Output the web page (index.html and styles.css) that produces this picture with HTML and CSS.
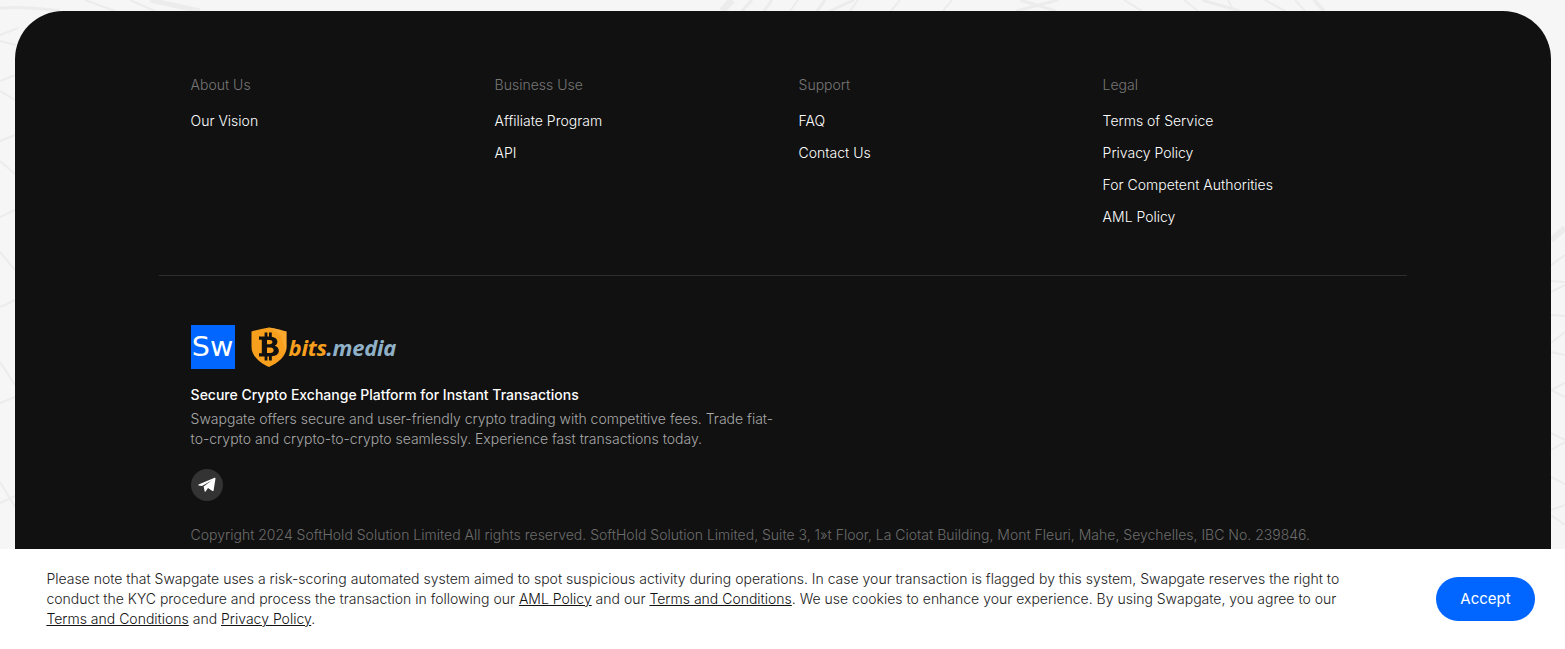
FILE: index.html
```html
<!DOCTYPE html>
<html lang="en">
<head>
<meta charset="utf-8">
<title>Swapgate</title>
<link rel="stylesheet" href="styles.css">
</head>
<body>
<svg class="bg-lines" width="1565" height="649" viewBox="0 0 1565 649" fill="none" aria-hidden="true">
  <g stroke="#ececec" stroke-width="2">
    <path d="M0 8Q25 6 60 11" stroke-width="3"/>
    <path d="M0 35L18 28"/>
    <path d="M0 41L16 45"/>
    <path d="M0 81L15 75"/>
    <path d="M0 91L15 100"/>
    <path d="M0 141L15 135"/>
    <path d="M0 161L15 174"/>
    <path d="M0 217L15 210"/>
    <path d="M0 252L15 270"/>
    <path d="M0 307L15 300"/>
    <path d="M0 362L15 385"/>
    <path d="M0 403L15 397"/>
    <path d="M0 482L15 507"/>
    <path d="M0 503L15 496"/>
    <path d="M85 0L115 11"/>
    <path d="M130 0L155 11"/>
    <path d="M150 0L200 11" stroke-width="5"/>
    <path d="M732 0L722 11" stroke-width="7"/>
    <path d="M752 0L742 11" stroke-width="3"/>
    <path d="M772 0L764 11" stroke-width="3"/>
    <path d="M798 0L790 11"/>
    <path d="M825 0L817 11" stroke-width="3"/>
    <path d="M854 0L830 11" stroke-width="3"/>
    <path d="M858 0L850 11"/>
    <path d="M900 0L891 11"/>
    <path d="M952 0L943 11"/>
    <path d="M1058 0L1016 11" stroke-width="3"/>
    <path d="M1020 0L1056 11" stroke-width="3"/>
    <path d="M1124 0L1142 11"/>
    <path d="M1184 0L1198 11"/>
    <path d="M1202 0L1240 11" stroke-width="3"/>
    <path d="M1228 0L1234 11"/>
    <path d="M1265 0L1285 11"/>
    <path d="M1295 0L1305 11"/>
    <path d="M1314 0L1324 11" stroke-width="4"/>
    <path d="M1551 240L1565 228" stroke-width="6"/>
    <path d="M1551 265L1565 255"/>
    <path d="M1551 281L1565 282"/>
    <path d="M1551 292L1565 285"/>
    <path d="M1551 315L1565 316"/>
    <path d="M1551 343L1565 332"/>
    <path d="M1551 352L1565 355"/>
    <path d="M1551 390L1565 383"/>
    <path d="M1551 390L1565 397"/>
    <path d="M1551 433L1565 440"/>
    <path d="M1551 450L1565 442"/>
    <path d="M1551 477L1565 484"/>
    <path d="M1551 510L1565 505"/>
    <path d="M1551 515L1565 525"/>
  </g>
</svg>
<footer class="footer">
  <div class="footer-inner">
    <nav class="link-grid">
      <div class="link-col">
        <h3 class="col-title">About Us</h3>
        <a class="col-link" href="#">Our Vision</a>
      </div>
      <div class="link-col">
        <h3 class="col-title">Business Use</h3>
        <a class="col-link" href="#">Affiliate Program</a>
        <a class="col-link" href="#">API</a>
      </div>
      <div class="link-col">
        <h3 class="col-title">Support</h3>
        <a class="col-link" href="#">FAQ</a>
        <a class="col-link" href="#">Contact Us</a>
      </div>
      <div class="link-col">
        <h3 class="col-title">Legal</h3>
        <a class="col-link" href="#">Terms of Service</a>
        <a class="col-link" href="#">Privacy Policy</a>
        <a class="col-link" href="#">For Competent Authorities</a>
        <a class="col-link" href="#">AML Policy</a>
      </div>
    </nav>
    <div class="about">
      <div class="logos">
        <div class="sw-logo"><span class="sw-mark">Sw</span></div>
        <div class="bits-logo">
          <svg class="shield" width="36" height="40" viewBox="0 0 36 40">
            <path d="M0.5 4.5C6 3 12 1.5 18 0.5C24 1.5 30 3 35.5 4.5V20C35.5 29 27 36 18 40C9 36 0.5 29 0.5 20Z" fill="#f8a01e"/>
            <path d="M18 0.5C24 1.5 30 3 35.5 4.5V20C35.5 22 35 24 34.5 25L30 8Z" fill="#fbb040" opacity=".55"/>
            <path d="M8 9.5H13.6V5.5H16.4V9.5H18V5.5H20.8V9.7C24.4 10.3 26.4 12 26.4 14.8C26.4 16.7 25.4 18 23.8 18.7C26.2 19.4 27.8 21.2 27.8 23.8C27.8 27.1 25.2 29 20.8 29.3V33.5H18V29.4H16.4V33.5H13.6V29.4H8V26.2H10.8V12.7H8ZM16 13V17.2H18.8C20.4 17.2 21.4 16.5 21.4 15.1S20.4 13 18.8 13ZM16 20.6V26H19.4C21.4 26 22.6 25.1 22.6 23.3S21.4 20.6 19.4 20.6Z" fill="#111" fill-rule="evenodd"/>
          </svg>
          <span class="bits-word"><span class="bits-orange">bits</span><span class="bits-blue">.media</span></span>
        </div>
      </div>
      <h4 class="about-title">Secure Crypto Exchange Platform for Instant Transactions</h4>
      <p class="about-text">Swapgate offers secure and user-friendly crypto trading with competitive fees. Trade fiat-to-crypto and crypto-to-crypto seamlessly. Experience fast transactions today.</p>
      <a class="social" href="#" aria-label="Telegram">
        <svg width="18" height="16" viewBox="0 0 18 16">
          <path d="M0.6 7.6L16.6 0.8C17.2 0.6 17.6 1 17.5 1.6L15.6 13.6C15.5 14.3 14.9 14.4 14.4 14.1L10 11L7.6 14.6C7.2 15 6.8 14.9 6.7 14.4L5.6 9.6L13.6 3.4L4 8.9L0.7 8.4C0.2 8.3 0.2 7.8 0.6 7.6Z" fill="#fff"/>
        </svg>
      </a>
      <p class="copyright">Copyright 2024 SoftHold Solution Limited All rights reserved. SoftHold Solution Limited, Suite 3, 1»t Floor, La Ciotat Building, Mont Fleuri, Mahe, Seychelles, IBC No. 239846.</p>
    </div>
  </div>
</footer>
<aside class="cookie">
  <p class="cookie-text">Please note that Swapgate uses a risk-scoring automated system aimed to spot suspicious activity during operations. In case your transaction is flagged by this system, Swapgate reserves the right to conduct the KYC procedure and process the transaction in following our <a href="#">AML Policy</a> and our <a href="#">Terms and Conditions</a>. We use cookies to enhance your experience. By using Swapgate, you agree to our <a href="#">Terms and Conditions</a> and <a href="#">Privacy Policy</a>.</p>
  <button class="accept" type="button">Accept</button>
</aside>
</body>
</html>
```
FILE: styles.css
```css
* { box-sizing: border-box; }
html, body { margin: 0; height: 649px; overflow: hidden; }
body {
  background: #f6f6f6;
  font-family: Inter, "Liberation Sans", sans-serif;
  font-size: 14px;
  font-weight: 300;
  line-height: 20px;
  padding: 11px 14px 0 15px;
}
.bg-lines { position: absolute; left: 0; top: 0; }
.footer {
  position: relative;
  background: #111;
  border-radius: 48px 48px 0 0;
  height: 638px;
}
.footer-inner { width: 1248px; margin: 0 auto; padding-top: 64px; }
.link-grid {
  display: grid;
  grid-template-columns: repeat(4, 304px);
  padding: 0 31.6px;
  height: 201px;
  border-bottom: 1px solid #2e2e2e;
}
.link-col { display: flex; flex-direction: column; gap: 12px; align-items: flex-start; }
.col-title { margin: 0 0 4px; font-size: 14px; font-weight: 350; line-height: 20px; color: #777; }
.col-link { color: #fff; text-decoration: none; }
.about { padding: 49px 32px 0 31.6px; }
.logos { display: flex; align-items: center; gap: 16px; height: 44px; }
.sw-logo {
  width: 44px; height: 44px;
  background: #0066ff; color: #fff;
  display: flex; align-items: center; justify-content: center;
}
.sw-mark {
  display: block;
  font-family: "DejaVu Sans", sans-serif;
  font-size: 27px; font-weight: 400; line-height: 44px;
  transform: scaleX(1.06);
}
.bits-logo { display: flex; align-items: center; gap: 2px; }
.shield { display: block; }
.bits-word {
  font-family: "Noto Sans", sans-serif;
  font-size: 22px; font-weight: 700; font-style: italic; line-height: 30px;
  letter-spacing: -0.3px;
}
.bits-orange { color: #f8a01e; }
.bits-blue { color: #8fb0c6; }
.about-title { margin: 16px 0 0; font-size: 14px; font-weight: 500; line-height: 20px; color: #fff; }
.about-text { margin: 4px 0 0; width: 600px; color: #a8a8a8; }
.social {
  width: 32px; height: 32px; margin-top: 20px;
  border-radius: 50%;
  background: #333;
  display: flex; align-items: center; justify-content: center;
}
.copyright { margin: 24px 0 0; color: #6c6c6c; white-space: nowrap; }
.cookie {
  position: fixed; left: 0; right: 0; bottom: 0;
  height: 100px;
  background: #fff;
  display: flex; align-items: center; justify-content: space-between;
  padding: 0 30px 0 46.4px;
}
.cookie-text { margin: 0; width: 1310px; color: #222; }
.cookie-text a { color: #111; text-decoration: underline; }
.accept {
  width: 99px; height: 44px;
  border: 0; border-radius: 22px;
  background: #0066ff; color: #fff;
  font: 400 15px/20px Inter, sans-serif;
}
```
